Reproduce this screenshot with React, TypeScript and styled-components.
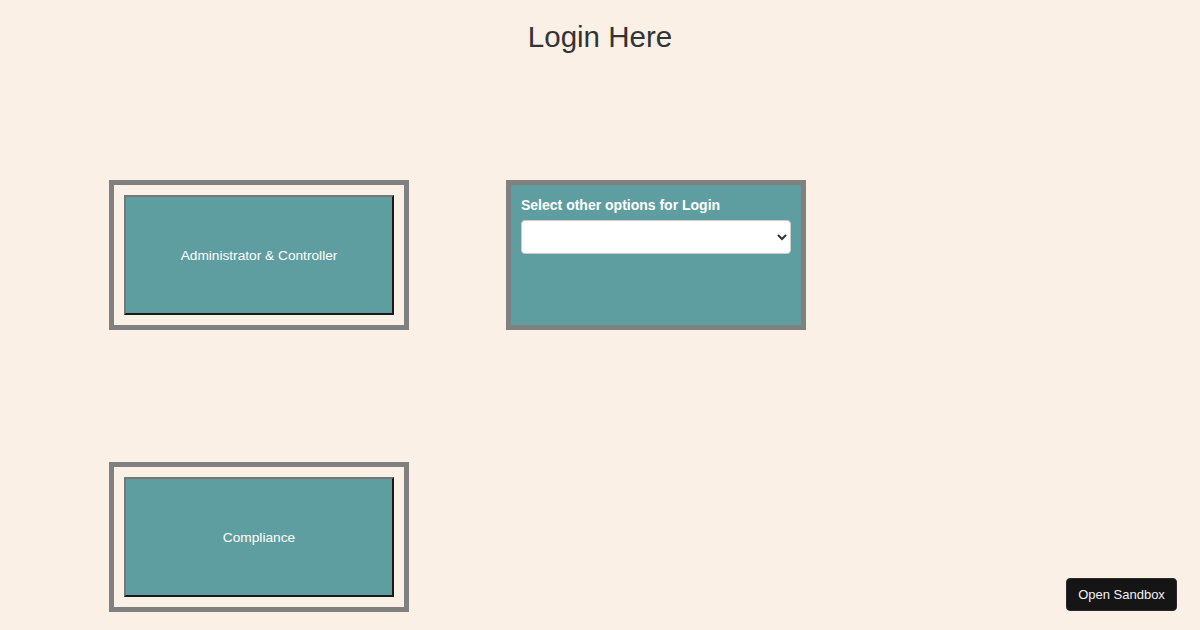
import React from "react";
import styled, { createGlobalStyle } from "styled-components";

const GlobalStyle = createGlobalStyle`
  html, body {
    margin: 0;
    padding: 0;
    background: #faf0e6;
    font-family: "Liberation Sans", Arial, sans-serif;
  }
`;

function App() {
  return (
    <>
      <GlobalStyle />
      <StyledPage>
        <StyledTitle>Login Here</StyledTitle>
        <StyledGrid>
          <StyledCard>
            <StyledRoleButton>Administrator &amp; Controller</StyledRoleButton>
          </StyledCard>
          <StyledCard $filled>
            <StyledLabel htmlFor="other-login">
              Select other options for Login
            </StyledLabel>
            <StyledSelect id="other-login" defaultValue="">
              <option value=""></option>
              <option value="auditor">Auditor</option>
              <option value="viewer">Viewer</option>
            </StyledSelect>
          </StyledCard>
          <StyledCard>
            <StyledRoleButton>Compliance</StyledRoleButton>
          </StyledCard>
        </StyledGrid>
      </StyledPage>
      <StyledSandboxButton>Open Sandbox</StyledSandboxButton>
    </>
  );
}

export default App;

const StyledPage = styled.div`
  width: 100%;
  min-height: 630px;
  display: flex;
  flex-direction: column;
`;

const StyledTitle = styled.h1`
  margin: 0;
  padding-top: 19px;
  font-size: 29.5px;
  line-height: 36px;
  font-weight: normal;
  text-align: center;
  color: #333;
`;

const StyledGrid = styled.div`
  display: grid;
  grid-template-columns: 300px 300px;
  column-gap: 97px;
  row-gap: 132px;
  margin: 125px 0 0 109px;
`;

const StyledCard = styled.div<{ $filled?: boolean }>`
  box-sizing: border-box;
  width: 300px;
  height: 150px;
  border: 5px solid #808080;
  padding: 10px;
  display: flex;
  flex-direction: column;
  background: ${({ $filled }) => ($filled ? "#5f9ea0" : "#faf0e6")};
`;

const StyledRoleButton = styled.button`
  width: 100%;
  height: 100%;
  background: #5f9ea0;
  color: #fff;
  font-family: "Liberation Sans", Arial, sans-serif;
  font-size: 13.7px;
  border-style: solid;
  border-width: 2px;
  border-color: #767676 #1a1a1a #1a1a1a #767676;
  cursor: pointer;
`;

const StyledLabel = styled.label`
  display: block;
  color: #fff;
  font-weight: bold;
  font-size: 14px;
  line-height: 16px;
  padding-top: 2px;
  margin-bottom: 7px;
`;

const StyledSelect = styled.select`
  box-sizing: border-box;
  width: 100%;
  height: 34px;
  border: 1px solid #ccc;
  border-radius: 4px;
  background: #fff;
  color: #333;
  font-family: "Liberation Sans", Arial, sans-serif;
  font-size: 14px;
`;

const StyledSandboxButton = styled.button`
  position: fixed;
  right: 23px;
  bottom: 19px;
  width: 111px;
  height: 33px;
  border: 1px solid #2a2a2a;
  border-radius: 4px;
  background: #151515;
  color: #f2f2f2;
  font-family: "Liberation Sans", Arial, sans-serif;
  font-size: 13px;
  cursor: pointer;
`;
